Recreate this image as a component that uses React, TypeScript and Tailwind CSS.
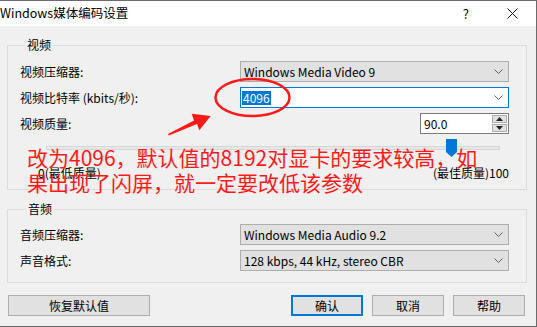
import React from 'react';

function Chevron() {
  return (
    <svg width="9" height="5" viewBox="0 0 9 5">
      <path d="M0.5 0.5 L4.5 4.5 L8.5 0.5" fill="none" stroke="#606060" strokeWidth="1" />
    </svg>
  );
}

function Select({ value }: { value: string }) {
  return (
    <div className="ml-auto flex h-[21px] w-[269px] items-center justify-between border border-[#adadad] bg-[#e1e1e1] pl-[3px] pr-[5px]">
      <span>{value}</span>
      <Chevron />
    </div>
  );
}

function Row({ label, children }: { label: string; children: React.ReactNode }) {
  return (
    <div className="flex items-center">
      <span>{label}</span>
      {children}
    </div>
  );
}

function Btn({ label, primary }: { label: string; primary?: boolean }) {
  return (
    <button
      className={
        primary
          ? 'flex h-[21px] w-[72px] items-center justify-center border-2 border-[#0078d7] bg-[#e1e1e1]'
          : 'flex h-[21px] w-[72px] items-center justify-center border border-[#adadad] bg-[#e1e1e1]'
      }
    >
      {label}
    </button>
  );
}

export default function App() {
  return (
    <div className="relative h-[327px] w-[537px] overflow-hidden border-t border-r border-b border-[#6b6b6b] bg-[#f0f0f0] font-['Noto_Sans_CJK_SC',sans-serif] text-[12px] leading-none text-black">
      {/* title bar */}
      <div className="flex h-[25px] items-center bg-white">
        <span className="text-[12.5px]">Windows媒体编码设置</span>
        <span className="ml-auto mr-[38px] text-[13px]">?</span>
        <svg width="11" height="11" viewBox="0 0 11 11" className="mr-[18px]">
          <path d="M0.5 0.5 L10.5 10.5 M10.5 0.5 L0.5 10.5" stroke="#111" strokeWidth="1" />
        </svg>
      </div>

      <div className="pl-[7px]">
        {/* video */}
        <fieldset className="mt-[11px] w-[520px] border border-[#dcdcdc] pb-[10px] pl-[12px] pr-[17px] pt-[8px]">
          <legend className="ml-[5px] px-[2px] leading-[16px]">视频</legend>
          <div className="flex flex-col gap-[5px]">
            <Row label="视频压缩器:">
              <Select value="Windows Media Video 9" />
            </Row>
            <Row label="视频比特率 (kbits/秒):">
              <div className="ml-auto flex h-[21px] w-[269px] items-center justify-between border border-[#0078d7] bg-white pl-[1px] pr-[5px]">
                <span className="bg-[#0078d7] px-[1px] py-[1px] text-white">4096</span>
                <Chevron />
              </div>
            </Row>
            <Row label="视频质量:">
              <div className="ml-auto flex h-[21px] w-[89px] items-center border border-[#7a7a7a] bg-white pl-[3px] pr-[1px]">
                <span>90.0</span>
                <div className="ml-auto flex h-[17px] w-[15px] flex-col gap-[1px]">
                  <div className="flex h-[8px] items-center justify-center border border-[#adadad] bg-[#e1e1e1]">
                    <svg width="7" height="4" viewBox="0 0 7 4"><path d="M0 4 L3.5 0 L7 4 Z" fill="#222" /></svg>
                  </div>
                  <div className="flex h-[8px] items-center justify-center border border-[#adadad] bg-[#e1e1e1]">
                    <svg width="7" height="4" viewBox="0 0 7 4"><path d="M0 0 L3.5 4 L7 0 Z" fill="#222" /></svg>
                  </div>
                </div>
              </div>
            </Row>
          </div>
          {/* slider */}
          <div className="relative ml-[26px] mt-[5px] flex h-[18px] w-[454px] items-center">
            <div className="h-[4px] w-full border border-[#d6d6d6] bg-[#e7e7e7]" />
            <svg width="11" height="18" viewBox="0 0 11 18" className="absolute left-[400px] top-0">
              <path d="M0 0 H11 V13 L5.5 18 L0 13 Z" fill="#0078d7" />
            </svg>
          </div>
          <div className="mt-[10px] flex items-center text-[12px]">
            <span className="ml-[18px]">0(最低质量)</span>
            <span className="ml-auto">(最佳质量)100</span>
          </div>
        </fieldset>

        {/* audio */}
        <fieldset className="mt-[11px] w-[520px] border border-[#dcdcdc] pb-[11px] pl-[12px] pr-[17px] pt-[7px]">
          <legend className="ml-[6px] px-[2px] leading-[16px]">音频</legend>
          <div className="flex flex-col gap-[5px]">
            <Row label="音频压缩器:">
              <Select value="Windows Media Audio 9.2" />
            </Row>
            <Row label="声音格式:">
              <Select value="128 kbps, 44 kHz, stereo CBR" />
            </Row>
          </div>
        </fieldset>

        {/* buttons */}
        <div className="mt-[12px] flex w-[518px] items-center pl-[1px]">
          <button className="flex h-[21px] w-[142px] items-center justify-center border border-[#adadad] bg-[#e1e1e1]">
            恢复默认值
          </button>
          <div className="ml-auto flex gap-[9px]">
            <Btn label="确认" primary />
            <Btn label="取消" />
            <Btn label="帮助" />
          </div>
        </div>
      </div>

      {/* annotation: ellipse + arrow */}
      <svg className="pointer-events-none absolute left-0 top-0" width="537" height="327">
        <ellipse cx="252.5" cy="96.5" rx="37" ry="18.5" fill="none" stroke="#ff1a1a" strokeWidth="2.5" />
        <polygon
          points="168,133 194,119.5 191.7,112.7 210.7,115 199.3,129.3 197,123 168.8,134.6"
          fill="#ff1a1a"
        />
      </svg>
      <div className="pointer-events-none absolute left-[27px] top-[144px] text-[21px] leading-[25px] text-[#ff1a1a]">
        改为4096，默认值的8192对显卡的要求较高，如
        <br />
        果出现了闪屏，就一定要改低该参数
      </div>
    </div>
  );
}
